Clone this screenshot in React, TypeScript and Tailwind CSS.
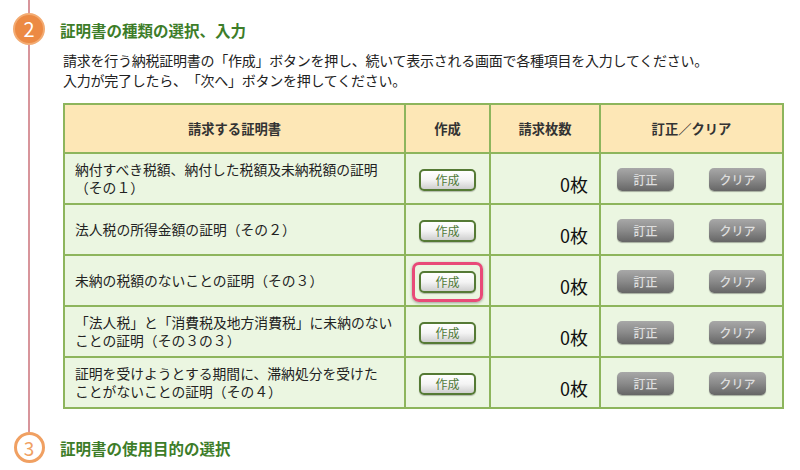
import React from "react";

type Row = { lines: string[]; highlight?: boolean };

const rows: Row[] = [
  { lines: ["納付すべき税額、納付した税額及未納税額の証明", "（その１）"] },
  { lines: ["法人税の所得金額の証明（その２）"] },
  { lines: ["未納の税額のないことの証明（その３）"], highlight: true },
  { lines: ["「法人税」と「消費税及地方消費税」に未納のない", "ことの証明（その３の３）"] },
  { lines: ["証明を受けようとする期間に、滞納処分を受けた", "ことがないことの証明（その４）"] },
];

const CreateButton: React.FC = () => (
  <button
    type="button"
    className="w-[57px] h-[22px] rounded-[5px] border-2 border-[#557a35] bg-gradient-to-b from-white via-[#f4f4f4] to-[#cfcfcf] text-[12px] leading-none text-[#4f7a38] shadow-[0_1px_1px_rgba(0,0,0,0.25)]"
  >
    作成
  </button>
);

const GrayButton: React.FC<{ label: string }> = ({ label }) => (
  <button
    type="button"
    className="w-[57px] h-[23px] rounded-[5px] bg-gradient-to-b from-[#a8a8a8] via-[#8a8a8a] to-[#666666] text-[12px] leading-none font-medium text-[#dedede] shadow-[0_1px_1px_rgba(0,0,0,0.3)]"
  >
    {label}
  </button>
);

export default function App() {
  return (
    <div
      className="w-[800px] h-[470px] bg-white flex overflow-hidden [text-spacing-trim:space-all]"
      style={{ fontFamily: '"Noto Sans CJK JP", "Noto Sans", sans-serif' }}
    >
      {/* timeline */}
      <div className="w-[58px] flex flex-col items-center shrink-0">
        <div className="w-[2px] h-[13px] bg-[#d8959b]" />
        <div className="w-[32px] h-[32px] rounded-full bg-[#ec8a44] border-2 border-[#f3ab72] flex items-center justify-center text-white text-[20px] leading-none">
          2
        </div>
        <div className="w-[2px] flex-1 bg-[#d8959b]" />
        <div className="w-[31px] h-[31px] rounded-full bg-white border-[3px] border-[#f0a062] flex items-center justify-center text-[#f0a062] text-[19px] leading-none">
          3
        </div>
        <div className="h-[7px]" />
      </div>

      {/* content */}
      <div className="flex-1 flex flex-col pt-[19px]">
        <h2 className="pl-[2px] text-[15.5px] leading-[22px] font-bold text-[#3d7d29]">
          証明書の種類の選択、入力
        </h2>
        <div className="mt-[9px] pl-[5px] text-[14px] tracking-[-0.25px] leading-[20px] text-[#222]">
          <p>請求を行う納税証明書の「作成」ボタンを押し、続いて表示される画面で各種項目を入力してください。</p>
          <p>入力が完了したら、「次へ」ボタンを押してください。</p>
        </div>

        <div className="mt-[13px] ml-[5px] w-[721px] grid grid-cols-[339px_83px_108px_181px] grid-rows-[47px_repeat(5,49px)] gap-[2px] p-[2px] bg-[#8db55c]">
          <div className="bg-[#fde7b6] flex items-center justify-center text-[13.3px] font-bold text-[#333]">請求する証明書</div>
          <div className="bg-[#fde7b6] flex items-center justify-center text-[13.3px] font-bold text-[#333]">作成</div>
          <div className="bg-[#fde7b6] flex items-center justify-center text-[13.3px] font-bold text-[#333]">請求枚数</div>
          <div className="bg-[#fde7b6] flex items-center justify-center text-[13.3px] font-bold text-[#333]">訂正／クリア</div>

          {rows.map((row, i) => (
            <React.Fragment key={i}>
              <div className="bg-[#ebf6e1] flex flex-col justify-center pl-[10px] text-[13.8px] leading-[17.5px] text-[#222]">
                {row.lines.map((l, j) => (
                  <span key={j}>{l}</span>
                ))}
              </div>
              <div className="bg-[#ebf6e1] flex items-center justify-center pt-[2px]">
                {row.highlight ? (
                  <div className="rounded-[7px] border-[3px] border-[#e84a78] px-[4px] py-[6px] shadow-[0_1px_3px_rgba(0,0,0,0.35)] flex">
                    <CreateButton />
                  </div>
                ) : (
                  <CreateButton />
                )}
              </div>
              <div className="bg-[#ebf6e1] flex items-center justify-end pr-[11px] pt-[10px] text-[18px] leading-none text-[#111]">
                0枚
              </div>
              <div className="bg-[#ebf6e1] flex items-center justify-center gap-[35px] pt-[2px]">
                <GrayButton label="訂正" />
                <GrayButton label="クリア" />
              </div>
            </React.Fragment>
          ))}
        </div>

        <h2 className="mt-[28px] pl-[2px] text-[15.5px] leading-[22px] font-bold text-[#3d7d29]">
          証明書の使用目的の選択
        </h2>
      </div>
    </div>
  );
}
